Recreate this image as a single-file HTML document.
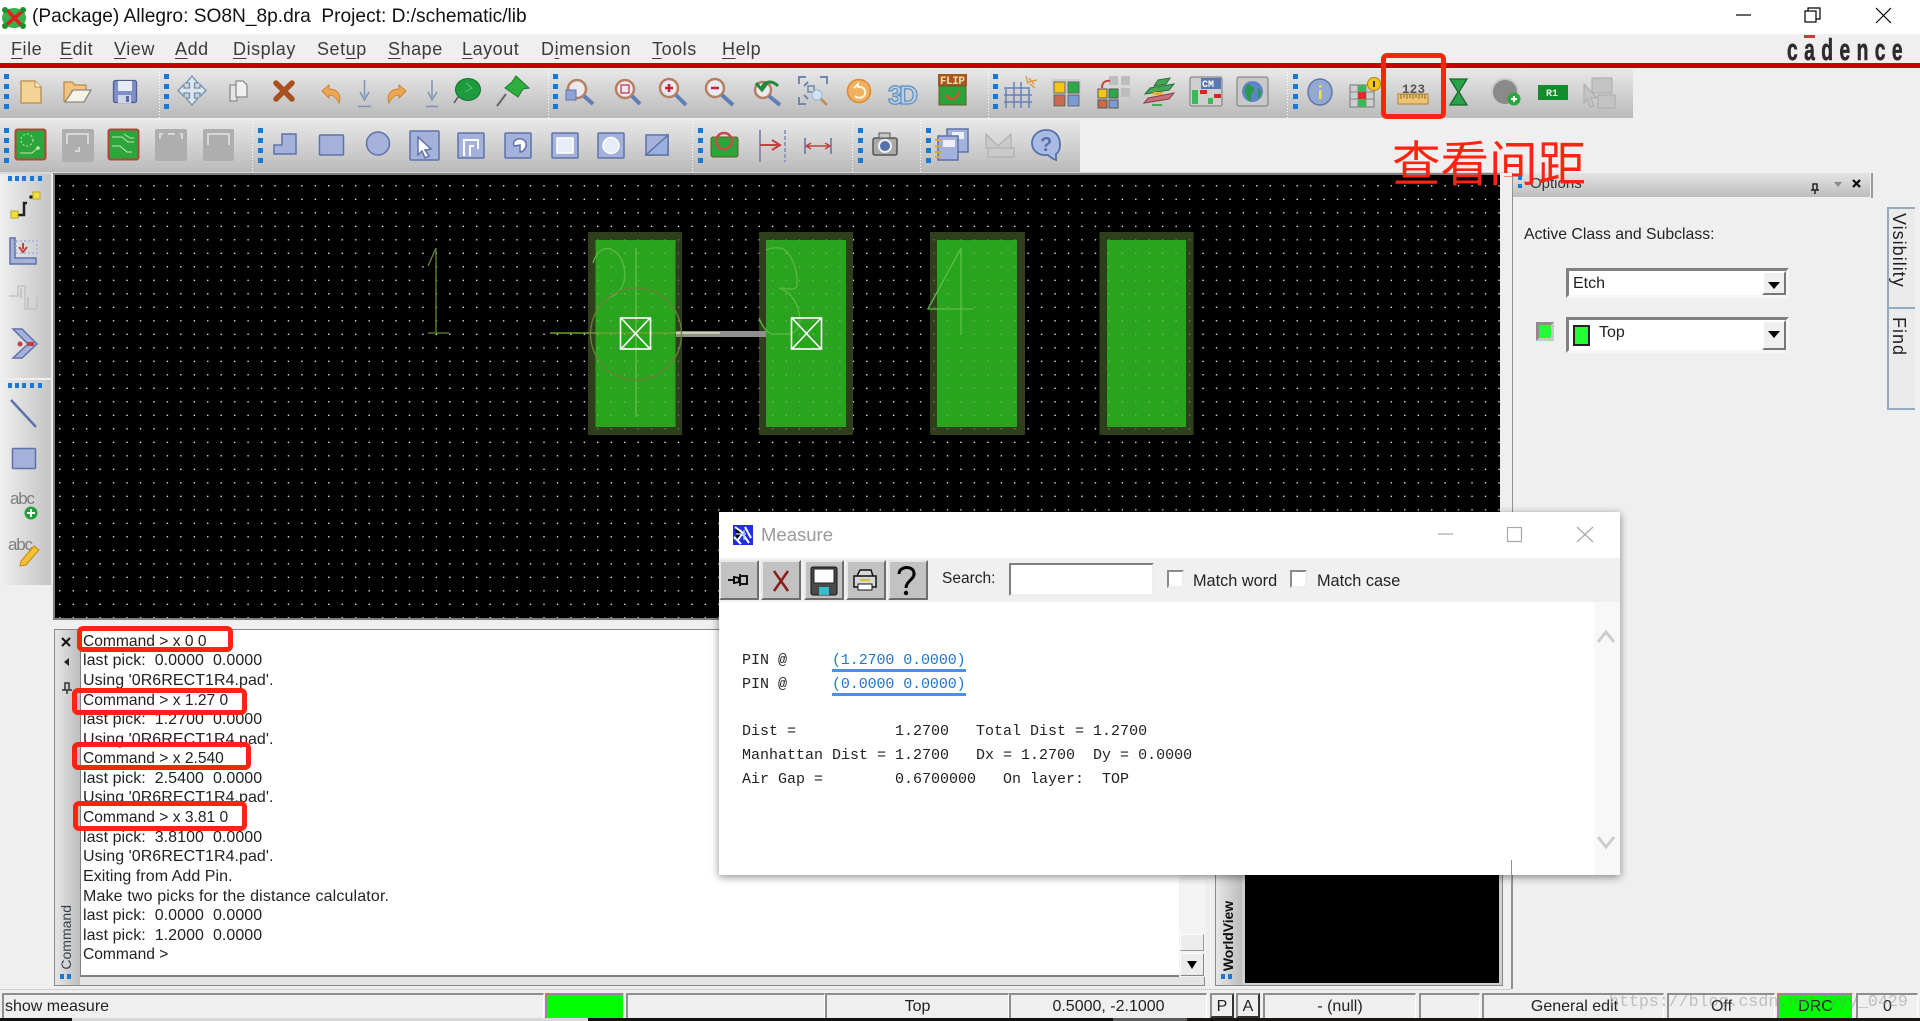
<!DOCTYPE html>
<html lang="en"><head><meta charset="utf-8"><title>Allegro Measure</title>
<style>
html,body{margin:0;padding:0;width:1920px;height:1021px;overflow:hidden;background:#efefef}
body{position:relative;font-family:"Liberation Sans",sans-serif;color:#222}
.a{position:absolute}
.t{position:absolute;white-space:pre;line-height:20px;font-size:15px}
.m{position:absolute;white-space:pre;font-size:18px;line-height:24px;top:37px;color:#3c3c3c;letter-spacing:.55px}
.m u{text-underline-offset:3px}
.bar{position:absolute;background:linear-gradient(#e8e8e8,#bababa)}
.red{position:absolute;border:5px solid #ff2312;border-radius:6px;box-sizing:border-box}
.cmd{position:absolute;left:83px;white-space:pre;font-size:16px;line-height:20px;color:#222;letter-spacing:.05px}
.cc{font-size:15.6px;letter-spacing:0}
.st{position:absolute;top:993px;height:25px;box-sizing:border-box;border-top:2px solid #8e8e8e;border-left:2px solid #8e8e8e;border-right:1px solid #fff;font-size:16px;line-height:24px;text-align:center;color:#222}
.mono{position:absolute;left:742px;font:15px/20px "Liberation Mono",monospace;white-space:pre;color:#222}
.lk{color:#1f76d2;border-bottom:3px solid #4a90dc;display:inline-block;line-height:17px;letter-spacing:-.1px}
.btn{position:absolute;top:560px;width:40px;height:40px;box-sizing:border-box;background:#c2c2c2;border:2px solid;border-color:#e8e8e8 #6e6e6e #6e6e6e #e8e8e8}
.chk{position:absolute;top:570px;width:17px;height:18px;box-sizing:border-box;background:#fff;border:2px solid;border-color:#8a8a8a #eee #eee #8a8a8a}
.combo{position:absolute;left:1566px;width:223px;box-sizing:border-box;background:#fff;border:3px solid;border-color:#808080 #f6f6f6 #f6f6f6 #808080}
.cb{position:absolute;right:0;top:0;bottom:0;width:24px;background:#efefef;border:2px solid;border-color:#fff #777 #777 #fff;box-sizing:border-box}
.cb:after{content:"";position:absolute;left:4px;top:9px;border:6px solid transparent;border-top:7px solid #000;border-bottom:0}
</style></head><body>

<!-- title bar -->
<div class="a" style="left:0;top:0;width:1920px;height:34px;background:#fff"></div>
<div class="t" style="left:32px;top:7px;font-size:19.15px;color:#111">(Package) Allegro: SO8N_8p.dra  Project: D:/schematic/lib</div>

<!-- menu -->
<div class="m" style="left:11px"><u>F</u>ile</div>
<div class="m" style="left:60px"><u>E</u>dit</div>
<div class="m" style="left:114px"><u>V</u>iew</div>
<div class="m" style="left:175px"><u>A</u>dd</div>
<div class="m" style="left:233px"><u>D</u>isplay</div>
<div class="m" style="left:317px">Set<u>u</u>p</div>
<div class="m" style="left:388px"><u>S</u>hape</div>
<div class="m" style="left:462px"><u>L</u>ayout</div>
<div class="m" style="left:541px">D<u>i</u>mension</div>
<div class="m" style="left:652px"><u>T</u>ools</div>
<div class="m" style="left:722px"><u>H</u>elp</div>
<div class="t" style="left:1787px;top:35px;font-size:31px;line-height:30px;font-weight:bold;color:#2c2c2c;letter-spacing:10.4px;transform:scaleX(.62);transform-origin:0 50%;-webkit-text-stroke:.6px #2c2c2c">cadence</div>
<div class="a" style="left:1804px;top:35px;width:11px;height:3px;background:#d8323c"></div>
<div class="a" style="left:0;top:63px;width:1920px;height:5px;background:#c90000"></div>

<!-- toolbars -->
<div class="bar" style="left:0;top:69px;width:1633px;height:49px"></div>
<div class="bar" style="left:0;top:120px;width:1080px;height:52px"></div>
<div class="a" style="left:0;top:172px;width:1512px;height:2px;background:#d8d8d8"></div>

<!-- left toolbars -->
<div class="a" style="left:0;top:174px;width:51px;height:204px;background:linear-gradient(90deg,#efefef,#c4c4c4);border-radius:0 0 0 4px"></div>
<div class="a" style="left:0;top:380px;width:51px;height:205px;background:linear-gradient(90deg,#efefef,#c4c4c4);border-radius:0 0 0 4px"></div>

<!-- canvas -->
<svg class="a" style="left:53px;top:173px" width="1450" height="447" viewBox="53 173 1450 447">
<defs><pattern id="g" x="59" y="185" width="13.45" height="13.5" patternUnits="userSpaceOnUse"><circle cx="0.8" cy="0.8" r="0.8" fill="#e6e6e6"/></pattern></defs>
<rect x="53" y="173" width="1447" height="447" fill="#808080"/>
<rect x="55" y="175" width="1445" height="443" fill="#000"/>
<rect x="55" y="175" width="1445" height="443" fill="url(#g)"/>
<rect x="588" y="232" width="94" height="203" fill="#2f3f1c"/><rect x="595.5" y="240" width="80" height="187" fill="#2aa31f"/>
<rect x="759" y="232" width="94" height="203" fill="#2f3f1c"/><rect x="766" y="240" width="80" height="187" fill="#2aa31f"/>
<rect x="930" y="232" width="95" height="203" fill="#2f3f1c"/><rect x="937" y="240" width="80" height="187" fill="#2aa31f"/>
<rect x="1099.5" y="232" width="94" height="203" fill="#2f3f1c"/><rect x="1107" y="240" width="79" height="187" fill="#2aa31f"/>
<g fill="url(#g)" opacity=".35">
<rect x="588" y="232" width="94" height="203"/><rect x="759" y="232" width="94" height="203"/><rect x="930" y="232" width="95" height="203"/><rect x="1099.5" y="232" width="94" height="203"/>
</g>
<rect x="676" y="331" width="90" height="6" fill="#8f8f8f"/>
<g fill="none" stroke-width="1.3">
<path d="M436 248V333M428 266L436 248M428 333H449" stroke="#5f8a2d"/>
<path d="M550 333H720" stroke="#6f9f33" stroke-width="1.5"/>
<path d="M676 333H720" stroke="#d8e0c8" stroke-width="1.5"/>
<path d="M636 248V417" stroke="#62c04a"/>
<path d="M593 263C597 250 606 246 612 250C626 256 628 280 620 290C612 300 606 296 607 300" stroke="#5cb845"/>
<path d="M766 250C772 247 778 248 780 248C790 250 798 268 797 285C795 292 790 288 779 288M779 288C792 292 799 305 800 320C799 330 795 333 788 334H772C766 332 762 326 759 318" stroke="#5cb845"/>
<path d="M961 248L928 309H973M961 248V334" stroke="#5cc048"/>
<ellipse cx="636" cy="334" rx="45.5" ry="46" stroke="#6d8038"/>
<g stroke="#fff" stroke-width="1.6"><rect x="620.5" y="318" width="30" height="31"/><path d="M621 318L650 349M650 318L621 349"/><rect x="791.5" y="318" width="30" height="31"/><path d="M792 318L821 349M821 318L792 349"/></g>
</g>
</svg>

<!-- options panel -->
<div class="a" style="left:1512px;top:173px;width:1px;height:816px;background:#909090"></div>
<div class="a" style="left:1513px;top:173px;width:357px;height:24px;background:linear-gradient(#e4e4e4,#bdbdbd)"></div>
<div class="a" style="left:1871px;top:173px;width:2px;height:25px;background:#9a9a9a"></div>
<div class="t" style="left:1530px;top:174px;font-size:15px;color:#333">Options</div>
<div class="t" style="left:1524px;top:225px;font-size:15.8px;color:#222">Active Class and Subclass:</div>
<div class="combo" style="top:268px;height:30px"><div class="t" style="left:4px;top:3px;font-size:16px;color:#222">Etch</div><div class="cb"></div></div>
<div class="combo" style="top:317px;height:36px"><div class="a" style="left:4px;top:5px;width:17px;height:21px;background:#22ff33;border:2px solid #222;box-sizing:border-box"></div><div class="t" style="left:30px;top:3px;font-size:16px;color:#222">Top</div><div class="cb"></div></div>
<div class="a" style="left:1536px;top:322px;width:18px;height:19px;box-sizing:border-box;background:#22ff33;border:3px solid;border-color:#8c8c8c #c8c8c8 #c8c8c8 #8c8c8c"></div>
<div class="a" style="left:1887px;top:207px;width:28px;height:101px;box-sizing:border-box;background:#ebebeb;border:2px solid #93abc0;border-right:0;border-bottom:0"></div>
<div class="a" style="left:1887px;top:307px;width:28px;height:103px;box-sizing:border-box;background:#ebebeb;border:2px solid #93abc0;border-right:0"></div>
<div class="t" style="left:1889px;top:213px;font-size:18px;line-height:20px;letter-spacing:1px;writing-mode:vertical-rl;color:#222">Visibility</div>
<div class="t" style="left:1889px;top:317px;font-size:18px;line-height:20px;letter-spacing:1px;writing-mode:vertical-rl;color:#222">Find</div>

<!-- command window -->
<div class="a" style="left:54px;top:629px;width:1151px;height:357px;background:#e4e4e4;border:1px solid #8a8a8a;box-sizing:border-box"></div>
<div class="a" style="left:55px;top:630px;width:25px;height:355px;background:linear-gradient(90deg,#e6e6e6,#bdbdbd)"></div>
<div class="a" style="left:80px;top:630px;width:1099px;height:347px;background:#fff;border-left:1px solid #808080;border-bottom:2px solid #808080;box-sizing:border-box"></div>
<div class="a" style="left:1179px;top:630px;width:26px;height:347px;background:#f3f3f3"></div>
<div class="a" style="left:1180px;top:934px;width:24px;height:17px;background:#ececec;border:1px solid;border-color:#fff #999 #999 #fff;box-sizing:border-box"></div>
<div class="a" style="left:1180px;top:953px;width:24px;height:23px;background:#ececec;border:1px solid;border-color:#fff #888 #888 #fff;box-sizing:border-box"></div>
<div class="a" style="left:1187px;top:961px;border:5px solid transparent;border-top:8px solid #000;border-bottom:0"></div>
<div class="cmd cc" style="top:632px">Command &gt; x 0 0</div>
<div class="cmd" style="top:651px">last pick:  0.0000  0.0000</div>
<div class="cmd" style="top:671px">Using '0R6RECT1R4.pad'.</div>
<div class="cmd cc" style="top:691px">Command &gt; x 1.27 0</div>
<div class="cmd" style="top:710px">last pick:  1.2700  0.0000</div>
<div class="cmd" style="top:730px">Using '0R6RECT1R4.pad'.</div>
<div class="cmd cc" style="top:749px">Command &gt; x 2.540</div>
<div class="cmd" style="top:769px">last pick:  2.5400  0.0000</div>
<div class="cmd" style="top:788px">Using '0R6RECT1R4.pad'.</div>
<div class="cmd cc" style="top:808px">Command &gt; x 3.81 0</div>
<div class="cmd" style="top:828px">last pick:  3.8100  0.0000</div>
<div class="cmd" style="top:847px">Using '0R6RECT1R4.pad'.</div>
<div class="cmd" style="top:867px">Exiting from Add Pin.</div>
<div class="cmd" style="top:887px;letter-spacing:.15px">Make two picks for the distance calculator.</div>
<div class="cmd" style="top:906px">last pick:  0.0000  0.0000</div>
<div class="cmd" style="top:926px">last pick:  1.2000  0.0000</div>
<div class="cmd cc" style="top:945px">Command &gt;</div>
<div class="t" style="left:57px;top:905px;font-size:14px;line-height:18px;writing-mode:vertical-rl;transform:rotate(180deg);color:#3a4250">Command</div>

<!-- world view -->
<div class="a" style="left:1215px;top:860px;width:288px;height:126px;background:#cfcfcf;border:1px solid #8a8a8a;box-sizing:border-box"></div>
<div class="a" style="left:1216px;top:860px;width:26px;height:125px;background:linear-gradient(90deg,#e6e6e6,#bdbdbd)"></div>
<div class="a" style="left:1245px;top:860px;width:254px;height:123px;background:#000"></div>
<div class="t" style="left:1219px;top:901px;font-size:14px;line-height:18px;writing-mode:vertical-rl;transform:rotate(180deg);color:#111;font-weight:bold;letter-spacing:-.1px">WorldView</div>

<!-- annotations -->
<div class="red" style="left:1381px;top:53px;width:65px;height:66px"></div>
<div class="t" style="left:1392px;top:137px;font-family:'Liberation Sans','Noto Sans CJK SC',sans-serif;font-size:48.5px;line-height:56px;color:#ff2312">查看间距</div>
<div class="red" style="left:77px;top:626px;width:156px;height:26px"></div>
<div class="red" style="left:72px;top:688px;width:175px;height:27px"></div>
<div class="red" style="left:72px;top:742px;width:179px;height:28px"></div>
<div class="red" style="left:73px;top:801px;width:174px;height:30px"></div>

<!-- ICONS -->
<svg class="a" style="left:0;top:0;filter:blur(.35px)" width="1920" height="1021" viewBox="0 0 1920 1021">
<g fill="none" stroke="#000" stroke-width="1.2"><path d="M1736 15H1751"/><rect x="1805" y="11" width="11" height="11"/><path d="M1808 11V8H1820V19H1816"/><path d="M1876 8L1891 23M1891 8L1876 23"/></g>
<!-- app icon -->
<ellipse cx="14" cy="18" rx="12" ry="10" fill="#35b34a"/><path d="M5 26L25 9M7 10L23 27" stroke="#e02020" stroke-width="3.5"/><circle cx="5" cy="10" r="3" fill="#1a8f2a"/><circle cx="23" cy="10" r="3" fill="#1a8f2a"/><circle cx="5" cy="26" r="3" fill="#1a8f2a"/><circle cx="23" cy="26" r="3" fill="#1a8f2a"/>
<!-- grippers -->
<g fill="#1679d8">
<rect x="4" y="74" width="5" height="5"/><rect x="4" y="84" width="5" height="5"/><rect x="4" y="94" width="5" height="5"/><rect x="4" y="104" width="5" height="5"/>
<rect x="164" y="74" width="5" height="5"/><rect x="164" y="84" width="5" height="5"/><rect x="164" y="94" width="5" height="5"/><rect x="164" y="104" width="5" height="5"/>
<rect x="553" y="74" width="5" height="5"/><rect x="553" y="84" width="5" height="5"/><rect x="553" y="94" width="5" height="5"/><rect x="553" y="104" width="5" height="5"/>
<rect x="993" y="74" width="5" height="5"/><rect x="993" y="84" width="5" height="5"/><rect x="993" y="94" width="5" height="5"/><rect x="993" y="104" width="5" height="5"/>
<rect x="1293" y="74" width="5" height="5"/><rect x="1293" y="84" width="5" height="5"/><rect x="1293" y="94" width="5" height="5"/><rect x="1293" y="104" width="5" height="5"/>
<rect x="4" y="128" width="5" height="5"/><rect x="4" y="138" width="5" height="5"/><rect x="4" y="148" width="5" height="5"/><rect x="4" y="158" width="5" height="5"/>
<rect x="258" y="128" width="5" height="5"/><rect x="258" y="138" width="5" height="5"/><rect x="258" y="148" width="5" height="5"/><rect x="258" y="158" width="5" height="5"/>
<rect x="698" y="128" width="5" height="5"/><rect x="698" y="138" width="5" height="5"/><rect x="698" y="148" width="5" height="5"/><rect x="698" y="158" width="5" height="5"/>
<rect x="858" y="128" width="5" height="5"/><rect x="858" y="138" width="5" height="5"/><rect x="858" y="148" width="5" height="5"/><rect x="858" y="158" width="5" height="5"/>
<rect x="926" y="128" width="5" height="5"/><rect x="926" y="138" width="5" height="5"/><rect x="926" y="148" width="5" height="5"/><rect x="926" y="158" width="5" height="5"/>
<rect x="8" y="176" width="4" height="5"/><rect x="15" y="176" width="4" height="5"/><rect x="22" y="176" width="4" height="5"/><rect x="30" y="176" width="4" height="5"/><rect x="38" y="176" width="4" height="5"/>
<rect x="8" y="383" width="4" height="5"/><rect x="15" y="383" width="4" height="5"/><rect x="22" y="383" width="4" height="5"/><rect x="30" y="383" width="4" height="5"/><rect x="38" y="383" width="4" height="5"/>
<rect x="60" y="974" width="4" height="5"/><rect x="67" y="974" width="4" height="5"/>
<rect x="1221" y="974" width="4" height="5"/><rect x="1228" y="974" width="4" height="5"/>
</g>
<g stroke="#fff" stroke-width="1" stroke-dasharray="1 2"><path d="M159.500 69V118M548.500 69V118M988.500 69V118M1287.500 69V118M252.500 120V172M692.500 120V172M852.500 120V172M920.500 120V172"/></g>

<!-- TB1 -->
<path d="M21 81H35L41 87V103H21Z" fill="#f2d596" stroke="#b58c4e" stroke-width="1.3"/><path d="M35 81V87H41" fill="#fff3d0" stroke="#b58c4e"/>
<path d="M64 101V82H72L75 85H86V91H72L66 101Z" fill="#f2c27e" stroke="#bd8a50" stroke-width="1.3"/><path d="M65 102L73 90H91L84 102Z" fill="#f5f2e6" stroke="#8c8a7c" stroke-width="1.3"/>
<rect x="113.500" y="80.500" width="23" height="22" rx="2" fill="#7d8fc4" stroke="#505f94" stroke-width="1.3"/><rect x="118" y="81" width="14" height="10" fill="#e8ebf6"/><rect x="118" y="95" width="13" height="8" fill="#cfd4e6"/><rect x="126" y="96" width="3" height="6" fill="#5a6aa0"/>
<path d="M192 76L198 83H194.500V88H200V84.500L206 90.500L200 96.500V93H194.500V98H198L192 105L186 98H189.500V93H184V96.500L178 90.500L184 84.500V88H189.500V83H186Z" fill="#dce6f0" stroke="#7090b2" stroke-width="1.3"/>
<path d="M230 85H237V101H230Z" fill="#e4e4e4" stroke="#8c8c8c" stroke-width="1.3"/><path d="M236 81H243L247 85V97H236Z" fill="#efefef" stroke="#8c8c8c" stroke-width="1.3"/>
<path d="M276 83L292 99M292 83L276 99" stroke="#a8501f" stroke-width="5.5" stroke-linecap="round"/>
<path d="M322 91L329 85V89C337 89 342 94 339 103C336 97 333 95 329 95V98Z" fill="#eda653" stroke="#c98434"/>
<path d="M406 91L399 85V89C391 89 386 94 389 103C392 97 395 95 399 95V98Z" fill="#eda653" stroke="#c98434"/>
<g stroke="#7d93b8" fill="none" stroke-width="1.5"><path d="M364.500 80V97M360 92L364.500 100L369 92M358 106.500H371"/><path d="M432 80V97M428 92L432 100L437 92M426 106.500H438"/></g>
<ellipse cx="468" cy="89.500" rx="12.500" ry="11" fill="#1e9a3f" stroke="#147030"/><path d="M466 83L472 88L465 92" stroke="#55cc70" fill="none"/><path d="M458 97L454 103" stroke="#555" stroke-width="1.5"/>
<path d="M516 76L529 88L523 89L518 97L505 88L512 82Z" fill="#2fae3f" stroke="#1a7d2a"/><path d="M506 94L497 106" stroke="#666" stroke-width="2"/>

<!-- zooms -->
<g>
<circle cx="577" cy="89" r="9" fill="#e9e9ee" stroke="#b77f62" stroke-width="2.5"/><path d="M584 96L593 104" stroke="#5f7fb5" stroke-width="4"/><rect x="566" y="90" width="10" height="10" fill="#8ea4d6" stroke="#5d72a8"/>
<circle cx="625" cy="89" r="9" fill="#e9e9ee" stroke="#b77f62" stroke-width="2.5"/><path d="M632 96L640 104" stroke="#5f7fb5" stroke-width="4"/><rect x="621" y="85" width="8" height="8" fill="none" stroke="#c0566a" stroke-width="1.5"/>
<circle cx="669" cy="88" r="9" fill="#e9e9ee" stroke="#b77f62" stroke-width="2.5"/><path d="M676 95L686 105" stroke="#5f7fb5" stroke-width="4"/><path d="M665 88H673M669 84V92" stroke="#c8203a" stroke-width="2.5"/>
<circle cx="715" cy="88" r="9" fill="#e9e9ee" stroke="#b77f62" stroke-width="2.5"/><path d="M722 95L733 105" stroke="#5f7fb5" stroke-width="4"/><path d="M711 88H719" stroke="#c8203a" stroke-width="2.500"/>
<circle cx="763" cy="90" r="8" fill="#e9e9ee" stroke="#b77f62" stroke-width="2.5"/><path d="M769 96L780 105" stroke="#5f7fb5" stroke-width="4"/><path d="M762 88C764 81 772 80 778 86M756 83L762 90L768 82" stroke="#1f8a3c" stroke-width="3" fill="none"/>
<g fill="none" stroke="#6d87ae" stroke-width="2"><path d="M799 84V77H806M820 77H827V84M799 97V104H806"/><path d="M804 86L808 82M804 95L808 99"/></g><rect x="808" y="86" width="6" height="6" fill="none" stroke="#6d87ae" stroke-width="1.5"/><circle cx="817" cy="95" r="5" fill="#cfe3f5" stroke="#9db6cf"/><path d="M821 99L827 105" stroke="#b88a50" stroke-width="2.5"/>
<circle cx="859" cy="91" r="11.500" fill="#f0b060" stroke="#d88a30" stroke-width="1.500"/><path d="M854 88L858 84V87C863 86 866 90 865 94C864 98 858 99 855 96" stroke="#fff4dd" stroke-width="2" fill="none"/>
<text x="888" y="104" font-family="Liberation Sans" font-weight="bold" font-size="26" fill="#b6cfe6" stroke="#5d8ec0" stroke-width="1.2" textLength="30">3D</text>
<rect x="938" y="74" width="29" height="12" fill="#a8561c"/><text x="940" y="84" font-family="Liberation Mono" font-weight="bold" font-size="11" fill="#f6dfb0" textLength="25">FLIP</text>
<rect x="939" y="86" width="27" height="19" fill="#2ca33a" stroke="#6a5a20"/><path d="M946 95C950 101 957 100 959 91" stroke="#c95a30" stroke-width="2.500" fill="none"/>
</g>
<g stroke="#6680b8" stroke-width="1.500" fill="none"><path d="M1006 89V108M1014 82V108M1021 82V108M1029 89V108M1004 88H1030M1004 95H1032M1004 102H1032"/></g><path d="M1028 82L1037 80M1030 84L1035 88M1029 78L1034 84M1026 76L1028 84" stroke="#dc9d50" stroke-width="1.500"/>
<rect x="1052" y="79" width="29" height="29" rx="2" fill="#cdcdcd"/><rect x="1054" y="82" width="11" height="11" fill="#f5c518" stroke="#666"/><rect x="1068" y="82" width="11" height="11" fill="#2bab47" stroke="#666"/><rect x="1054" y="95" width="11" height="11" fill="#c76a4f" stroke="#666"/><rect x="1068" y="95" width="11" height="11" fill="#7c9ad4" stroke="#666"/>
<rect x="1109" y="76" width="9" height="9" fill="#bdbdbd"/><rect x="1121" y="76" width="9" height="9" fill="#bdbdbd"/><rect x="1121" y="88" width="9" height="9" fill="#bdbdbd"/>
<rect x="1098" y="89" width="9" height="9" fill="#f5c518" stroke="#555"/><rect x="1109" y="89" width="9" height="9" fill="#2bab47" stroke="#555"/><rect x="1098" y="100" width="9" height="8" fill="#c76a4f" stroke="#555"/><rect x="1109" y="100" width="9" height="8" fill="#7c9ad4" stroke="#555"/><path d="M1102 88C1102 82 1106 80 1110 81" fill="none" stroke="#c84040" stroke-width="2"/>
<path d="M1150 88L1174 84L1169 90L1145 94Z" fill="#41a858" stroke="#2b6e3a"/><path d="M1148 98L1174 93L1169 99L1144 103Z" fill="#c7707a" stroke="#8a3f47"/><path d="M1158 80L1170 78L1166 84L1154 86Z" fill="#41a858" stroke="#2b6e3a"/><rect x="1152" y="104" width="10" height="2" fill="#41a858"/><rect x="1153" y="92" width="10" height="3" fill="#e0b040"/>
<rect x="1190" y="77" width="32" height="29" rx="2" fill="#cfcfcf" stroke="#777"/><rect x="1201" y="78" width="20" height="11" fill="#5b78b6"/><text x="1202" y="87" font-family="Liberation Mono" font-weight="bold" font-size="10" fill="#fff">CM</text><rect x="1200" y="90" width="7" height="4" fill="#e02020"/><rect x="1214" y="94" width="7" height="4" fill="#e02020"/><rect x="1192" y="90" width="6" height="14" fill="#3cb85a"/><rect x="1208" y="98" width="5" height="6" fill="#3cb85a"/>
<rect x="1237" y="77" width="31" height="29" rx="2" fill="#c9c9c9" stroke="#777"/><circle cx="1252.500" cy="91.500" r="10.500" fill="#5d84c4"/><path d="M1248 84C1253 86 1256 90 1252 93C1249 96 1254 100 1249 101C1245 95 1243 89 1248 84ZM1258 88C1262 90 1262 96 1258 99Z" fill="#2a9a48"/>
<ellipse cx="1320" cy="92" rx="12" ry="13" fill="#94a8d4" stroke="#6077a8" stroke-width="1.500"/><rect x="1319" y="90" width="2.500" height="9" fill="#f0e040"/><rect x="1319" y="85" width="2.500" height="2.500" fill="#f0e040"/>
<rect x="1350" y="85" width="24" height="22" fill="#cfcfcf" stroke="#777"/><path d="M1350 92H1374M1350 99H1374M1358 85V107M1366 85V107" stroke="#888"/><rect x="1358" y="92" width="8" height="7" fill="#d83030"/><rect x="1358" y="85" width="8" height="7" fill="#3cb85a"/><rect x="1358" y="99" width="8" height="8" fill="#3cb85a"/><circle cx="1374" cy="84" r="6.500" fill="#f5c518" stroke="#a88a10"/><rect x="1373" y="81" width="2" height="6" fill="#333"/>
<text x="1402" y="93" font-family="Liberation Mono" font-size="12.500" fill="#555" font-weight="bold" textLength="23">123</text><rect x="1398" y="94" width="30" height="10" fill="#eec373" stroke="#b47f2c"/><path d="M1401 94V99M1404 94V98M1407 94V99M1410 94V98M1413 94V99M1416 94V98M1419 94V99M1422 94V98M1425 94V99" stroke="#8a6a2a"/>
<path d="M1450 79H1467L1459 92L1467 105H1450L1458 92Z" fill="#2aa24a" stroke="#17682c" stroke-width="1.300"/>
<circle cx="1505" cy="92" r="13" fill="#8a8a8a" stroke="#c8c8c8" stroke-width="2"/><circle cx="1514" cy="99" r="6.500" fill="#2aa83f"/><path d="M1511 99H1517M1514 96V102" stroke="#fff" stroke-width="2"/>
<rect x="1538" y="85" width="30" height="15" fill="#148c2b"/><text x="1546" y="96" font-family="Liberation Mono" font-weight="bold" font-size="10" fill="#e8f5e8">R1</text>
<g fill="#c4c4c4" stroke="#aaa"><rect x="1592" y="78" width="20" height="15"/><rect x="1598" y="95" width="17" height="13"/><path d="M1584 84L1597 98L1591 98L1594 106L1590 107L1587 99L1584 103Z"/></g>

<!-- TB2 -->
<rect x="15.500" y="129.500" width="30" height="30" rx="2" fill="#2ca53a" stroke="#b5433a" stroke-width="2"/><circle cx="27" cy="140" r="6" fill="none" stroke="#c3e5b8" stroke-dasharray="2 2"/><path d="M20 153H32L38 148" stroke="#c3e5b8" fill="none"/><circle cx="38" cy="148" r="1.800" fill="#c3e5b8"/>
<g fill="#aeaeae"><rect x="62" y="129" width="32" height="33" rx="2"/><rect x="155" y="129" width="32" height="32" rx="2"/><rect x="203" y="129" width="31" height="32" rx="2"/></g>
<g fill="none" stroke="#d8d8d8" stroke-width="2"><path d="M67 144V134H88V144M79 147V151M75 151H80"/><path d="M160 139V134H163M168 134H175M180 134H182V139"/><path d="M208 145V134H229V145"/></g>
<rect x="108.500" y="129.500" width="30" height="30" rx="2" fill="#2ca53a" stroke="#b5433a" stroke-width="2"/><path d="M112 137H122L128 142H134M112 146H120L127 152H132M124 134L130 138H134" stroke="#c3e5b8" fill="none"/>
<g fill="#a4b1db" stroke="#5d72a8" stroke-width="1.500">
<path d="M274 145H282V134H296V154H274Z"/><rect x="319.500" y="135" width="24" height="20" rx="1"/><ellipse cx="378" cy="143.500" rx="11.500" ry="11.500"/>
<rect x="410" y="131" width="29" height="29" rx="1"/><path d="M418 137L431 149L425 150L429 156L425 158L422 151L418 155Z" fill="#fff"/>
<rect x="458" y="133" width="26" height="25" rx="1"/><path d="M464 156V140H478V149M470 156V146H474" fill="none" stroke="#fff" stroke-width="2"/>
<rect x="505" y="133" width="26" height="25" rx="1"/><path d="M514 146C511 138 524 136 526 143C527 148 523 152 520 152V145Z" fill="#fff" stroke="#5d72a8"/>
<rect x="552" y="133" width="26" height="25" rx="1"/><rect x="557" y="138" width="16" height="15" fill="#e8ecf6" stroke="#fff"/>
<rect x="598" y="133" width="26" height="25" rx="1"/><ellipse cx="611" cy="145.500" rx="8" ry="8" fill="#e8ecf6" stroke="#fff"/>
<path d="M646 135H668V155H646Z"/><path d="M668 135L646 155H668Z" fill="#9ab0df"/><path d="M646 135H668" stroke="#6b84b6"/>
</g>
<rect x="711" y="137" width="27" height="20" rx="2" fill="#2ca53a" stroke="#6a5a20"/><ellipse cx="724" cy="141" rx="8" ry="8" fill="none" stroke="#c84a4a" stroke-width="2.500"/>
<path d="M760 130V162" stroke="#6d7a9a" stroke-width="1.500"/><path d="M785 130V162" stroke="#7d8ab8" stroke-dasharray="4 2" stroke-width="1.500"/><path d="M760 145H778M772 140L780 145L772 150" stroke="#c44040" stroke-width="2" fill="none"/>
<path d="M805 138V154M831 138V154" stroke="#5d72a8" stroke-width="1.500"/><path d="M807 146H829M811 143L806 146L811 149M825 143L830 146L825 149" stroke="#c44040" fill="none" stroke-width="1.500"/>
<rect x="873" y="138" width="24" height="17" rx="2" fill="#a9a9a9" stroke="#555" stroke-width="1.500"/><rect x="879" y="133" width="11" height="5" fill="#c5c5c5" stroke="#555"/><circle cx="885" cy="146" r="6" fill="#5572a8" stroke="#eee" stroke-width="2"/>
<rect x="947" y="129" width="21" height="23" fill="#a4b1db" stroke="#5d72a8" stroke-width="1.500"/><rect x="952" y="132" width="12" height="7" fill="#eef"/>
<rect x="938" y="136" width="20" height="24" fill="#a4b1db" stroke="#5d72a8" stroke-width="1.500"/><rect x="943" y="140" width="12" height="7" fill="#eef"/><path d="M935 140H941M935 146H941M935 152H941M935 157H941" stroke="#d8a830" stroke-width="2"/>
<g fill="#cacaca" stroke="#aaa"><rect x="988" y="148" width="26" height="9"/><path d="M986 134L998 146L1011 134V148H986Z"/></g>
<path d="M1046 130C1056 130 1060 137 1060 145C1060 150 1058 153 1056 154V160C1053 159 1050 157 1048 155C1039 156 1032 151 1032 143C1032 136 1038 130 1046 130Z" fill="#a9bbe4" stroke="#5670a8" stroke-width="1.800"/><text x="1040" y="151" font-family="Liberation Sans" font-weight="bold" font-size="20" fill="#5670a8">?</text>

<!-- left toolbar icons -->
<path d="M14 215H24V203H27" fill="none" stroke="#222" stroke-width="2.500"/><circle cx="31" cy="197" r="1.800" fill="#222"/><rect x="11" y="211" width="7" height="7" fill="#f0df40" stroke="#bda820"/><rect x="33" y="192" width="7" height="7" fill="#f0df40" stroke="#bda820"/>
<path d="M10 238H15V258H36V264H10Z" fill="#a4b1db" stroke="#5d72a8" stroke-width="1.500"/><rect x="16" y="241" width="21" height="12" fill="none" stroke="#a4b1db" stroke-dasharray="2 2" stroke-width="1.500"/><path d="M23 243V249M19 247L23 252L27 247" stroke="#c44040" stroke-width="2" fill="none"/>
<path d="M9 296H18V286H25V309H37V297" fill="none" stroke="#c2c2c2" stroke-width="1.500"/><path d="M21 288V298M28 297V308" stroke="#bbb" stroke-width="1.500"/>
<path d="M13 329H22L37 344L22 358H13L28 344Z" fill="#a4b1db" stroke="#5d72a8" stroke-width="1.500"/><circle cx="20" cy="344" r="2.500" fill="#c44040"/><rect x="27" y="342" width="7" height="4" fill="#c44040"/>
<path d="M11 400L36 427" stroke="#5d72a8" stroke-width="2.500"/>
<rect x="12.500" y="448.500" width="23" height="20" rx="1" fill="#a4b1db" stroke="#5d72a8" stroke-width="1.500"/>
<text x="10" y="504" font-family="Liberation Sans" font-size="17" fill="#7d7d7d" textLength="25">abc</text><circle cx="31" cy="513" r="6.500" fill="#1fa23a"/><path d="M27 513H35M31 509V517" stroke="#fff" stroke-width="2"/>
<text x="8" y="550" font-family="Liberation Sans" font-size="17" fill="#7d7d7d" textLength="25">abc</text><path d="M21 561L34 546L39 550L26 565L20 566Z" fill="#f2c230" stroke="#c88a18"/>

<!-- command strip icons -->
<path d="M62 638L70 646M70 638L62 646" stroke="#111" stroke-width="2"/><path d="M69 658V666L64 662Z" fill="#222"/><path d="M65 683H69V690H65ZM62 690H72M67 690V694" fill="none" stroke="#333" stroke-width="1.500"/>
<!-- options header icons -->
<path d="M1813 184H1817V190H1813ZM1811 190H1819M1815 190V194" fill="none" stroke="#222" stroke-width="1.500"/><path d="M1834 182H1842L1838 187Z" fill="#888"/><path d="M1853 180L1860 187M1860 180L1853 187" stroke="#000" stroke-width="2.200"/>
<rect x="1518" y="176" width="4" height="4" fill="#1679d8"/><rect x="1518" y="184" width="4" height="4" fill="#1679d8"/>
<rect x="1500" y="173" width="12" height="3" fill="#efefef"/>
</svg>

<!-- Measure dialog -->
<div class="a" style="left:719px;top:512px;width:901px;height:363px;background:#fff;box-shadow:0 2px 8px rgba(0,0,0,.45)"></div>
<svg class="a" style="left:719px;top:512px" width="901" height="90" viewBox="719 512 901 90">
<rect x="733" y="525" width="20" height="20" fill="#1f2fe0"/><path d="M735 527L743 533L737 541M745 527L751 538M740 530L749 543M734 537L741 544" stroke="#fff" stroke-width="2"/><path d="M736 534H746M744 530V540" stroke="#a8c8f0" stroke-width="1.500"/>
<g fill="none" stroke="#a8a8a8" stroke-width="1.200"><path d="M1438 534H1453"/><rect x="1507.500" y="527.500" width="14" height="14"/><path d="M1577 527L1593 542M1593 527L1577 542"/></g>
</svg>
<div class="t" style="left:761px;top:525px;font-size:18.5px;color:#9a9a9a">Measure</div>
<div class="a" style="left:719px;top:558px;width:901px;height:44px;background:#f0f0f0"></div>
<div class="btn" style="left:719px"></div><div class="btn" style="left:761px"></div><div class="btn" style="left:804px"></div><div class="btn" style="left:846px"></div><div class="btn" style="left:888px"></div>
<svg class="a" style="left:719px;top:560px" width="210" height="40" viewBox="719 560 210 40">
<path d="M728 580H734M734 577L739 578V582L734 583ZM740 574V586M740 576H747V584H740" fill="none" stroke="#000" stroke-width="1.800"/>
<path d="M774 571L788 591M788 571L774 591" stroke="#8e1a1a" stroke-width="2.500"/>
<rect x="811" y="567" width="26" height="28" rx="2" fill="#4a4a4a" stroke="#111"/><rect x="814" y="569" width="20" height="14" fill="#fff" stroke="#222"/><rect x="819" y="587" width="10" height="8" fill="#39bcc6"/>
<path d="M857 576L860 570H871L873 576ZM854 576H876V587H854Z" fill="#d8d8d8" stroke="#111" stroke-width="1.500"/><rect x="858" y="584" width="14" height="6" fill="#fff" stroke="#111"/><path d="M860 580H870" stroke="#d8c030" stroke-width="2"/>
<path d="M899 574C899 566 913 565 914 573C915 579 906 581 906 588" fill="none" stroke="#000" stroke-width="3"/><circle cx="906" cy="593" r="2.200" fill="#000"/>
</svg>
<div class="t" style="left:942px;top:569px;font-size:15.5px;color:#222">Search:</div>
<div class="a" style="left:1009px;top:563px;width:145px;height:33px;box-sizing:border-box;background:#fff;border:2px solid;border-color:#808080 #eee #eee #808080"></div>
<div class="chk" style="left:1167px"></div><div class="t" style="left:1193px;top:571px;font-size:16.3px;color:#222">Match word</div>
<div class="chk" style="left:1290px"></div><div class="t" style="left:1317px;top:571px;font-size:16.3px;color:#222">Match case</div>
<div class="a" style="left:1594px;top:602px;width:26px;height:273px;background:#f8f8f8"></div>
<svg class="a" style="left:1594px;top:625px" width="26" height="230" viewBox="0 0 26 230"><path d="M4 17L12 7L20 17M4 212L12 222L20 212" fill="none" stroke="#ccc" stroke-width="3"/></svg>

<div class="mono" style="top:651px">PIN @</div><div class="a" style="left:832px;top:652px;font:15px/17px 'Liberation Mono',monospace"><span class="lk">(1.2700 0.0000)</span></div>
<div class="mono" style="top:675px">PIN @</div><div class="a" style="left:832px;top:676px;font:15px/17px 'Liberation Mono',monospace"><span class="lk">(0.0000 0.0000)</span></div>
<div class="mono" style="top:722px">Dist =           1.2700   Total Dist = 1.2700</div>
<div class="mono" style="top:746px">Manhattan Dist = 1.2700   Dx = 1.2700  Dy = 0.0000</div>
<div class="mono" style="top:770px">Air Gap =        0.6700000   On layer:  TOP</div>

<!-- status bar -->
<div class="a" style="left:0;top:989px;width:1511px;height:1px;background:#d0d0d0"></div>
<div class="a" style="left:1511px;top:860px;width:1px;height:129px;background:#909090"></div>
<div class="st" style="left:2px;width:542px;text-align:left;padding-left:1px">show measure</div>
<div class="st" style="left:545px;width:79px;background:#00ff00"></div>
<div class="st" style="left:626px;width:199px"></div>
<div class="st" style="left:825px;width:184px">Top</div>
<div class="st" style="left:1009px;width:198px">0.5000, -2.1000</div>
<div class="st" style="left:1210px;width:24px;border-right:2px solid #333;border-bottom:2px solid #333">P</div>
<div class="st" style="left:1236px;width:24px;border-right:2px solid #333;border-bottom:2px solid #333">A</div>
<div class="st" style="left:1263px;width:153px">- (null)</div>
<div class="st" style="left:1419px;width:61px"></div>
<div class="st" style="left:1482px;width:182px;padding-left:2px">General edit</div>
<div class="st" style="left:1667px;width:108px">Off</div>
<div class="st" style="left:1777px;width:76px;background:#00ff00">DRC</div>
<div class="st" style="left:1856px;width:62px">0</div>
<div class="a" style="left:0;top:1018px;width:72px;height:3px;background:#111"></div>
<div class="a" style="left:72px;top:1018px;width:516px;height:3px;background:#d8d8d8"></div>
<div class="a" style="left:588px;top:1018px;width:525px;height:3px;background:#111"></div>
<div class="a" style="left:1113px;top:1018px;width:74px;height:3px;background:#5a5a5a"></div>
<div class="a" style="left:1187px;top:1018px;width:733px;height:3px;background:#1a1510"></div>
<div class="t" style="left:1609px;top:992px;font:16.6px/20px 'Liberation Mono',monospace;color:rgba(130,130,130,.45)">https://blog.csdn.net/yyy_0429</div>
</body></html>
